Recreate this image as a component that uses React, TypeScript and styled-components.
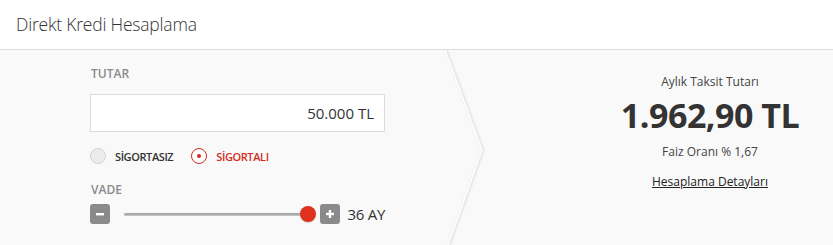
import React from "react";
import styled, { createGlobalStyle } from "styled-components";

const Global = createGlobalStyle`
  html, body { margin: 0; padding: 0; background: #f9f9f9; }
  body { font-family: "Open Sans", "Noto Sans", Arial, sans-serif; color: #333; }
  * { box-sizing: border-box; }
`;

const Page = styled.div`
  width: 833px;
  height: 245px;
  background: #f9f9f9;
  overflow: hidden;
`;

const Header = styled.header`
  height: 50px;
  background: #fff;
  border-bottom: 1px solid #dcdcdc;
  display: flex;
  align-items: center;
  padding: 0 0 2px 16px;
`;

const Title = styled.h1`
  margin: 0;
  font-size: 17.5px;
  font-weight: 300;
  color: #333;
  letter-spacing: -0.2px;
`;

const Body = styled.div`
  display: grid;
  grid-template-columns: 440px 50px 1fr;
  height: 195px;
`;

const Form = styled.div`
  padding: 16px 0 0 90px;
  display: flex;
  flex-direction: column;
  width: 385px;
`;

const Label = styled.div`
  font-size: 12px;
  font-weight: 600;
  color: #8a8a8a;
  line-height: 16px;
  margin-left: 1px;
`;

const AmountBox = styled.div`
  margin-top: 12px;
  height: 38px;
  background: #fff;
  border: 1px solid #dcdcdc;
  display: flex;
  align-items: center;
  justify-content: flex-end;
  padding-right: 10px;
  font-size: 15px;
  color: #333;
`;

const RadioRow = styled.div`
  display: flex;
  align-items: center;
  margin-top: 16px;
  height: 16px;
  gap: 18px;
`;

const RadioItem = styled.label<{ $active?: boolean }>`
  display: flex;
  align-items: center;
  gap: 9px;
  font-size: 11px;
  font-weight: 600;
  letter-spacing: -0.4px;
  color: ${(p) => (p.$active ? "#d52b1e" : "#333")};
`;

const RadioCircle = styled.span<{ $active?: boolean }>`
  width: 16px;
  height: 16px;
  border-radius: 50%;
  display: flex;
  align-items: center;
  justify-content: center;
  background: ${(p) => (p.$active ? "#fff" : "#ececec")};
  border: 1px solid ${(p) => (p.$active ? "#d52b1e" : "#d4d4d4")};
  &::after {
    content: "";
    display: ${(p) => (p.$active ? "block" : "none")};
    width: 4px;
    height: 4px;
    border-radius: 50%;
    background: #d52b1e;
  }
`;

const VadeLabel = styled(Label)`
  margin-top: 18px;
`;

const SliderRow = styled.div`
  display: flex;
  align-items: center;
  margin-top: 6px;
  height: 20px;
`;

const StepButton = styled.span`
  width: 20px;
  height: 20px;
  border-radius: 3px;
  background: #8a8a8a;
  display: flex;
  align-items: center;
  justify-content: center;
  flex-shrink: 0;
`;

const Track = styled.div`
  position: relative;
  flex: 1;
  margin: 0 4px 0 14px;
  height: 20px;
  display: flex;
  align-items: center;
  &::before {
    content: "";
    flex: 1;
    margin-right: 8px;
    height: 3px;
    border-radius: 2px;
    background: linear-gradient(#9a9a9a, #c8c8c8);
  }
`;

const Thumb = styled.span`
  position: absolute;
  right: 0;
  top: 2px;
  width: 16px;
  height: 16px;
  border-radius: 50%;
  background: #e0301e;
  box-shadow: 0 1px 1px rgba(0, 0, 0, 0.15);
`;

const Months = styled.span`
  margin-left: 8px;
  font-size: 15px;
  letter-spacing: -0.3px;
  color: #333;
  white-space: nowrap;
`;

const Divider = styled.div`
  display: flex;
`;

const Result = styled.div`
  justify-self: end;
  width: 246px;
  padding-top: 24px;
  display: flex;
  flex-direction: column;
  align-items: center;
  white-space: nowrap;
`;

const SmallText = styled.div`
  font-size: 12px;
  color: #444;
  line-height: 16px;
`;

const Amount = styled.div`
  margin-top: 5px;
  font-size: 34px;
  font-weight: 700;
  color: #333;
  line-height: 40px;
  letter-spacing: -0.5px;
`;

const Rate = styled(SmallText)`
  margin-top: 9px;
`;

const DetailLink = styled.a`
  margin-top: 14px;
  font-size: 12px;
  line-height: 16px;
  color: #222;
  text-decoration: underline;
  cursor: pointer;
`;

const Minus = () => (
  <svg width="10" height="10" viewBox="0 0 10 10">
    <rect x="1" y="4" width="8" height="2.4" fill="#fff" />
  </svg>
);

const Plus = () => (
  <svg width="10" height="10" viewBox="0 0 10 10">
    <rect x="1" y="3.8" width="8" height="2.4" fill="#fff" />
    <rect x="3.8" y="1" width="2.4" height="8" fill="#fff" />
  </svg>
);

const Chevron = () => (
  <svg width="50" height="195" viewBox="0 0 50 195">
    <defs>
      <filter id="blur" x="-50%" y="-10%" width="200%" height="120%">
        <feGaussianBlur stdDeviation="0.9" />
      </filter>
    </defs>
    <polyline
      points="6,0 43,100 9,195"
      fill="none"
      stroke="#dedede"
      strokeWidth="2.4"
      filter="url(#blur)"
    />
    <polyline points="5,0 42,100 8,195" fill="none" stroke="#fff" strokeWidth="1.5" />
  </svg>
);

export default function App() {
  return (
    <Page>
      <Global />
      <Header>
        <Title>Direkt Kredi Hesaplama</Title>
      </Header>
      <Body>
        <Form>
          <Label>TUTAR</Label>
          <AmountBox>50.000 TL</AmountBox>
          <RadioRow>
            <RadioItem>
              <RadioCircle />
              SİGORTASIZ
            </RadioItem>
            <RadioItem $active>
              <RadioCircle $active />
              SİGORTALI
            </RadioItem>
          </RadioRow>
          <VadeLabel>VADE</VadeLabel>
          <SliderRow>
            <StepButton>
              <Minus />
            </StepButton>
            <Track>
              <Thumb />
            </Track>
            <StepButton>
              <Plus />
            </StepButton>
            <Months>36 AY</Months>
          </SliderRow>
        </Form>
        <Divider>
          <Chevron />
        </Divider>
        <Result>
          <SmallText>Aylık Taksit Tutarı</SmallText>
          <Amount>1.962,90 TL</Amount>
          <Rate>Faiz Oranı % 1,67</Rate>
          <DetailLink>Hesaplama Detayları</DetailLink>
        </Result>
      </Body>
    </Page>
  );
}
